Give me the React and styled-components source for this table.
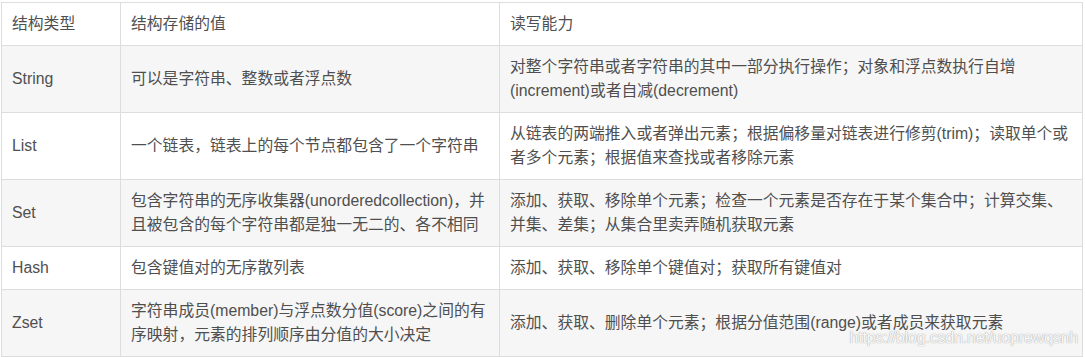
import React from "react";
import styled, { createGlobalStyle } from "styled-components";

const Global = createGlobalStyle`
  html, body { margin: 0; padding: 0; background: #fff; }
  body {
    font-family: "Liberation Sans", Arial, "Noto Sans CJK SC", sans-serif;
    color: #4f4f4f;
  }
`;

const Wrap = styled.div`
  position: relative;
  padding: 2px 0 0 1px;
  width: 1082px;
`;

const Table = styled.table`
  border-collapse: collapse;
  width: 1082px;
  table-layout: fixed;
  font-size: 15.8px;
  line-height: 24px;
`;

const Col = styled.col`
  width: ${(p) => p.$w || "auto"};
`;

const Row = styled.tr`
  background: ${(p) => (p.$shade ? "#f6f6f6" : "#ffffff")};
`;

const Cell = styled.td`
  border: 1px solid #dddddd;
  padding: 9px 10px;
  vertical-align: middle;
  text-align: left;
  font-weight: normal;
  color: #4f4f4f;
`;

const Watermark = styled.div`
  position: absolute;
  right: 5px;
  bottom: 10px;
  font-family: "Liberation Sans", Arial, sans-serif;
  font-size: 16px;
  letter-spacing: -0.2px;
  color: rgba(255, 255, 255, 0.95);
  text-shadow: 0 0 1px rgba(140, 140, 140, 0.7), 0 0 1px rgba(140, 140, 140, 0.5);
  pointer-events: none;
`;

const rows = [
  ["String", "可以是字符串、整数或者浮点数", "对整个字符串或者字符串的其中一部分执行操作；对象和浮点数执行自增(increment)或者自减(decrement)"],
  ["List", "一个链表，链表上的每个节点都包含了一个字符串", "从链表的两端推入或者弹出元素；根据偏移量对链表进行修剪(trim)；读取单个或者多个元素；根据值来查找或者移除元素"],
  ["Set", "包含字符串的无序收集器(unorderedcollection)，并且被包含的每个字符串都是独一无二的、各不相同", "添加、获取、移除单个元素；检查一个元素是否存在于某个集合中；计算交集、并集、差集；从集合里卖弄随机获取元素"],
  ["Hash", "包含键值对的无序散列表", "添加、获取、移除单个键值对；获取所有键值对"],
  ["Zset", "字符串成员(member)与浮点数分值(score)之间的有序映射，元素的排列顺序由分值的大小决定", "添加、获取、删除单个元素；根据分值范围(range)或者成员来获取元素"],
];

export default function App() {
  return (
    <>
      <Global />
      <Wrap>
        <Table>
          <colgroup>
            <Col $w="119px" />
            <Col $w="379px" />
            <Col />
          </colgroup>
          <thead>
            <Row>
              <Cell as="th">结构类型</Cell>
              <Cell as="th">结构存储的值</Cell>
              <Cell as="th">读写能力</Cell>
            </Row>
          </thead>
          <tbody>
            {rows.map((r, i) => (
              <Row key={r[0]} $shade={i % 2 === 0}>
                <Cell>{r[0]}</Cell>
                <Cell>{r[1]}</Cell>
                <Cell>{r[2]}</Cell>
              </Row>
            ))}
          </tbody>
        </Table>
        <Watermark>https://blog.csdn.net/uoprewqsnh</Watermark>
      </Wrap>
    </>
  );
}
